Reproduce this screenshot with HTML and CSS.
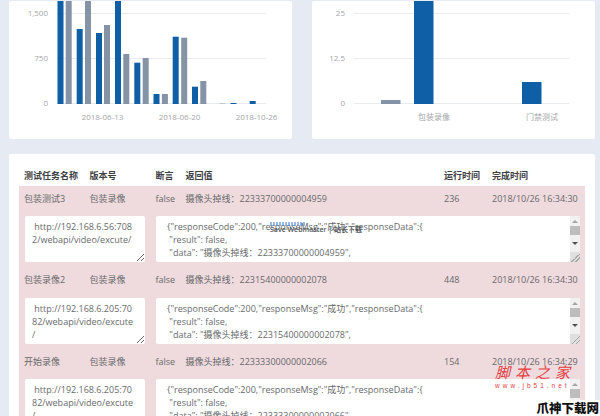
FILE: index.html
```html
<!DOCTYPE html>
<html lang="zh-CN">
<head>
<meta charset="utf-8">
<title>测试任务</title>
<link rel="stylesheet" href="styles.css">
</head>
<body>
<div class="page">
  <div class="charts">
    <section class="card chart-card">
      <svg class="chart" viewBox="0 0 283 138" width="283" height="138">
        <g class="grid">
          <line x1="48" x2="257" y1="12.5" y2="12.5"/>
          <line x1="48" x2="257" y1="57.5" y2="57.5"/>
          <line x1="48" x2="257" y1="102.5" y2="102.5"/>
        </g>
        <g class="axis-y">
          <text x="39" y="15">1,500</text>
          <text x="39" y="60">750</text>
          <text x="39" y="105">0</text>
        </g>
        <g class="blue">
          <rect x="48.5" y="0" width="6" height="103"/>
          <rect x="67.7" y="28" width="6" height="75"/>
          <rect x="87" y="32" width="6" height="71"/>
          <rect x="106" y="0" width="6" height="103"/>
          <rect x="125.3" y="61.7" width="6" height="41.3"/>
          <rect x="144.5" y="93" width="6" height="10"/>
          <rect x="163.7" y="35.7" width="6" height="67.3"/>
          <rect x="183" y="85.7" width="6" height="17.3"/>
          <rect x="221.5" y="102" width="6" height="1"/>
          <rect x="240.7" y="100" width="6" height="3"/>
        </g>
        <g class="gray">
          <rect x="56.7" y="0" width="6" height="103"/>
          <rect x="76" y="0" width="6" height="103"/>
          <rect x="95" y="24" width="6" height="79"/>
          <rect x="114.3" y="53" width="6" height="50"/>
          <rect x="133.7" y="57" width="6" height="46"/>
          <rect x="152.9" y="93" width="6" height="10"/>
          <rect x="172.2" y="36.7" width="6" height="66.3"/>
          <rect x="191.3" y="80" width="6" height="23"/>
          <rect x="210.5" y="102.6" width="6" height="0.4"/>
        </g>
        <g class="axis-x">
          <text x="93.5" y="119">2018-06-13</text>
          <text x="170.5" y="119">2018-06-20</text>
          <text x="247.5" y="119">2018-10-26</text>
        </g>
      </svg>
    </section>
    <section class="card chart-card">
      <svg class="chart" viewBox="0 0 283 138" width="283" height="138">
        <g class="grid">
          <line x1="42" x2="257" y1="12.5" y2="12.5"/>
          <line x1="42" x2="257" y1="57.5" y2="57.5"/>
          <line x1="42" x2="257" y1="102.5" y2="102.5"/>
        </g>
        <g class="axis-y">
          <text x="33" y="15">25</text>
          <text x="33" y="60">12.5</text>
          <text x="33" y="105">0</text>
        </g>
        <rect class="gray" x="69" y="99" width="19.5" height="4"/>
        <rect class="blue" x="102" y="0" width="19.5" height="103"/>
        <rect class="blue" x="210" y="81" width="19.5" height="22"/>
        <g class="axis-x">
          <text x="122" y="119">包装录像</text>
          <text x="230" y="119">门禁测试</text>
        </g>
      </svg>
    </section>
  </div>

  <section class="card table-card">
    <div class="row head">
      <div>测试任务名称</div><div>版本号</div><div>断言</div><div>返回值</div><div>运行时间</div><div>完成时间</div>
    </div>
    <div class="body">
      <div class="row">
        <div>包装测试3</div><div>包装录像</div><div>false</div><div>摄像头掉线：22333700000004959</div><div>236</div><div>2018/10/26 16:34:30</div>
      </div>
      <div class="detail">
        <textarea class="url" readonly> http://192.168.6.56:7082/webapi/video/excute/</textarea>
        <div class="json-box">
          <textarea class="json" readonly>{"responseCode":200,"responseMsg":"成功","responseData":{
 "result": false,
 "data": "摄像头掉线：22333700000004959",
 "code": 500,
 "message": "摄像头掉线"
}}</textarea>
          <div class="scrollbar"><span class="up"></span><span class="thumb"></span><span class="down"></span><span class="corner"></span></div>
        </div>
      </div>
      <div class="row">
        <div>包装录像2</div><div>包装录像</div><div>false</div><div>摄像头掉线：22315400000002078</div><div>448</div><div>2018/10/26 16:34:30</div>
      </div>
      <div class="detail">
        <textarea class="url" readonly> http://192.168.6.205:7082/webapi/video/excute
/</textarea>
        <div class="json-box">
          <textarea class="json" readonly>{"responseCode":200,"responseMsg":"成功","responseData":{
 "result": false,
 "data": "摄像头掉线：22315400000002078",
 "code": 500,
 "message": "摄像头掉线"
}}</textarea>
          <div class="scrollbar"><span class="up"></span><span class="thumb"></span><span class="down"></span><span class="corner"></span></div>
        </div>
      </div>
      <div class="row">
        <div>开始录像</div><div>包装录像</div><div>false</div><div>摄像头掉线：22333300000002066</div><div>154</div><div>2018/10/26 16:34:29</div>
      </div>
      <div class="detail">
        <textarea class="url" readonly> http://192.168.6.205:7082/webapi/video/excute
/</textarea>
        <div class="json-box">
          <textarea class="json" readonly>{"responseCode":200,"responseMsg":"成功","responseData":{
 "result": false,
 "data": "摄像头掉线：22333300000002066",
 "code": 500,
 "message": "摄像头掉线"
}}</textarea>
          <div class="scrollbar"><span class="up"></span><span class="thumb"></span><span class="down"></span><span class="corner"></span></div>
        </div>
      </div>
    </div>
  </section>
</div>

<div class="ghost"><span class="ghost-smudge"></span>Save Webmaster | 站长下载</div>
<div class="mark-jb">
  <div class="mark-cn">脚本之家</div>
  <div class="mark-url">www.jb51.net</div>
</div>
<div class="mark-dl">爪神下载网</div>
</body>
</html>
```
FILE: styles.css
```css
* { box-sizing: border-box; }
html, body { margin: 0; height: 100%; overflow: hidden; }
body {
  background: #e6eaf3;
  font-family: "Open Sans", "Noto Sans CJK SC", sans-serif;
  font-size: 9px;
  color: #676a6c;
  position: relative;
}
.page { padding: 1px 5px 0 9px; }
.card { background: #fff; border-radius: 2px; }
.charts { display: flex; gap: 20px; }
.chart-card { width: 283px; height: 138px; }
.chart { display: block; }
.chart text { font-family: "Open Sans", "Noto Sans CJK SC", sans-serif; font-size: 8px; fill: #a3a6a8; }
.grid line { stroke: #e8ebee; stroke-width: 1; }
.axis-y text { text-anchor: end; }
.axis-x text { text-anchor: middle; }
.blue, .blue rect { fill: #0f5fa6; }
.gray, .gray rect { fill: #8593a6; }

.table-card { margin-top: 15px; padding: 11px 10px 0; height: 270px; }
.row {
  display: grid;
  grid-template-columns: 65.5px 66px 30px 258.5px 48px 1fr;
  align-items: center;
  padding-left: 5px;
  height: 21px;
}
.head { font-weight: 700; color: #3d4043; }
.body { background: #efdadd; height: 250px; }
.body > .row:first-child { height: 24px; }
.body > .row:not(:first-child) { height: 18px; margin-top: 8.5px; }
.detail { display: flex; gap: 11px; padding: 6px 5px 0 6px; }
.body > .row:not(:first-child) + .detail { padding-top: 9px; }
textarea {
  display: block;
  height: 46px;
  margin: 0;
  border: 0;
  border-radius: 2px;
  background: #fff;
  color: #676a6c;
  font: inherit;
  line-height: 13px;
  outline: none;
  padding: 4px 8px 4px 7px;
  overflow: hidden;
  white-space: pre-wrap;
}
.url { width: 120px; word-break: break-all; }
.json-box { position: relative; width: 424px; height: 46px; }
.json { width: 100%; padding: 4px 12px 4px 11px; resize: none; }
.scrollbar {
  position: absolute; top: 0; right: 0; bottom: 0; width: 10px;
  background: #f1f1f1;
  display: flex; flex-direction: column; align-items: center;
}
.up, .down { width: 0; height: 0; border-left: 3px solid transparent; border-right: 3px solid transparent; }
.up { border-bottom: 3px solid #a5a5a5; margin-top: 4px; }
.thumb { width: 100%; height: 9px; background: #bdbdbd; margin-top: 3px; }
.down { border-top: 3px solid #505050; margin-top: 7px; }
.corner {
  width: 100%; height: 10px; margin-top: auto;
  background: linear-gradient(135deg, #dfdfdf 55%, #a8a8a8 55%, #a8a8a8 62%, #dfdfdf 62%, #dfdfdf 75%, #a8a8a8 75%, #a8a8a8 82%, #dfdfdf 82%);
}

.ghost {
  position: absolute; left: 270px; top: 225px;
  font-size: 7px; line-height: 10px; font-weight: 600; color: #55585c; white-space: nowrap;
}
.ghost-smudge {
  position: absolute; left: 0; top: -3px; width: 36px; height: 4px; opacity: .6;
  background: repeating-linear-gradient(90deg, #4f8ad6 0 2px, transparent 2px 3px);
}
.mark-jb { position: absolute; left: 495px; top: 365px; width: 76px; color: #e2403f; }
.mark-cn { font-family: "Noto Sans CJK SC", sans-serif; font-size: 15px; line-height: 14px; letter-spacing: 5px; font-style: italic; white-space: nowrap; }
.mark-url { font-family: "Liberation Sans", sans-serif; font-size: 6.5px; line-height: 8px; letter-spacing: 3px; margin-top: 3px; white-space: nowrap; }
.mark-dl {
  position: absolute; right: 0; bottom: 0; padding: 0 1px 0 3px;
  background: #fff; color: #111; font-family: "Noto Sans CJK SC", sans-serif;
  font-weight: 900; font-size: 12.5px; line-height: 16px; white-space: nowrap;
}
```
